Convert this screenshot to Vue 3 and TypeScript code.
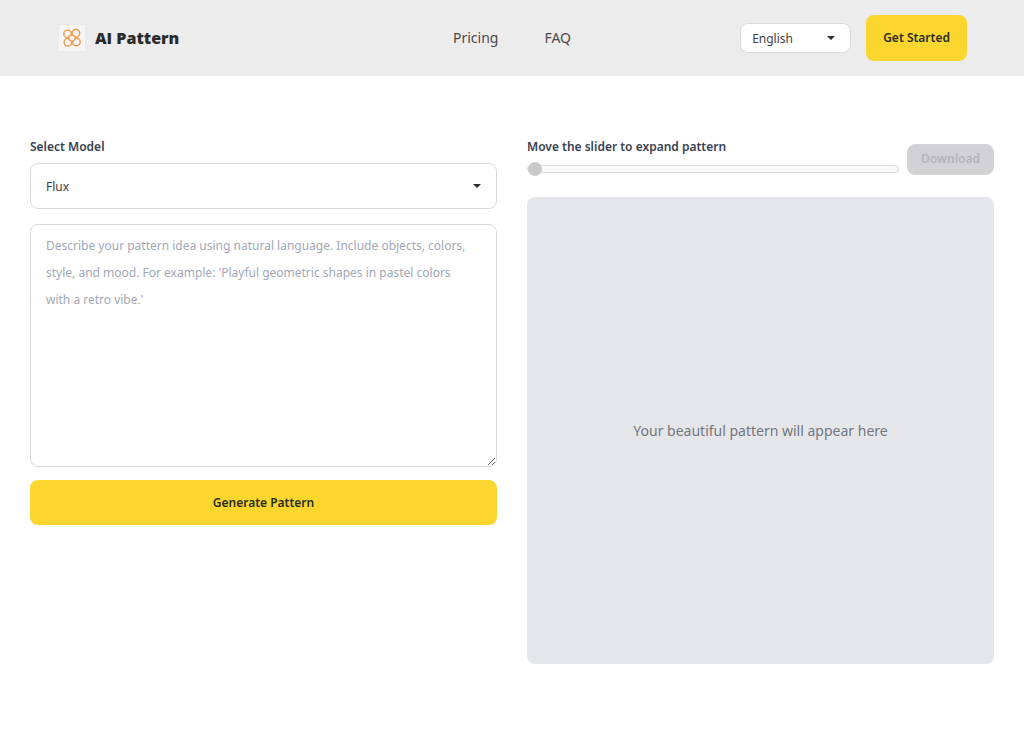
<script setup lang="ts">
import { ref } from 'vue'

const languages: string[] = ['English', 'Español', 'Français']
const models: string[] = ['Flux', 'Stable Diffusion']
const language = ref('English')
const model = ref('Flux')
const prompt = ref('')
const expansion = ref(0)
const placeholder =
  "Describe your pattern idea using natural language. Include objects, colors, style, and mood. For example: 'Playful geometric shapes in pastel colors with a retro vibe.'"
</script>

<template>
  <div class="page">
    <header class="header">
      <a class="brand" href="#">
        <svg class="logo" viewBox="0 0 26 26" aria-hidden="true">
          <rect width="26" height="26" fill="#f7f5f3" />
          <g fill="none" stroke="#eb9a4c" stroke-width="1.4">
            <circle cx="8.6" cy="8.9" r="3.8" />
            <circle cx="16.9" cy="8.3" r="3.8" />
            <circle cx="8.9" cy="17.2" r="3.8" />
            <circle cx="17.4" cy="17" r="3.8" />
            <path d="M13 9.6l3 1.9.2 3-3.1 2-3.1-1.8-.1-3.3z" fill="#f7f5f3" />
          </g>
        </svg>
        <span>AI Pattern</span>
      </a>
      <nav class="nav">
        <a href="#pricing">Pricing</a>
        <a href="#faq">FAQ</a>
      </nav>
      <div class="actions">
        <div class="select language">
          <select v-model="language" aria-label="Language">
            <option v-for="item in languages" :key="item">{{ item }}</option>
          </select>
          <svg class="caret" viewBox="0 0 8 4" aria-hidden="true"><path d="M0 0h8L4 4z" fill="#2b2b2b" /></svg>
        </div>
        <button class="button start" type="button">Get Started</button>
      </div>
    </header>

    <main class="main">
      <form class="form" @submit.prevent>
        <label class="label" for="model">Select Model</label>
        <div class="select model">
          <select id="model" v-model="model">
            <option v-for="item in models" :key="item">{{ item }}</option>
          </select>
          <svg class="caret" viewBox="0 0 8 4" aria-hidden="true"><path d="M0 0h8L4 4z" fill="#2b2b2b" /></svg>
        </div>
        <textarea v-model="prompt" class="prompt" rows="8" aria-label="Pattern description" :placeholder="placeholder"></textarea>
        <button class="button" type="submit">Generate Pattern</button>
      </form>

      <section class="result">
        <div class="toolbar">
          <div class="expand">
            <label class="label" for="expansion">Move the slider to expand pattern</label>
            <input id="expansion" v-model="expansion" class="slider" type="range" min="0" max="100" />
          </div>
          <button class="download" type="button" disabled>Download</button>
        </div>
        <div class="preview">Your beautiful pattern will appear here</div>
      </section>
    </main>
  </div>
</template>

<style>
body {
  margin: 0;
  background: #fff;
}
</style>

<style scoped>
.page,
.page * {
  box-sizing: border-box;
}
.page {
  font-family: 'Noto Sans', 'Open Sans', sans-serif;
  font-size: 12px;
  line-height: 22px;
  color: #374151;
}
a {
  color: inherit;
  text-decoration: none;
}
button,
select,
textarea {
  font: inherit;
}
.header {
  display: grid;
  grid-template-columns: 1fr auto 1fr;
  align-items: center;
  padding: 15px 57px;
  background: #ececec;
}
.brand {
  display: flex;
  align-items: center;
  gap: 10px;
  padding-left: 2px;
  font-family: 'Open Sans', 'Noto Sans', sans-serif;
  font-size: 16px;
  font-weight: 800;
  color: #2b2b2b;
}
.logo {
  width: 26px;
  height: 26px;
}
.nav {
  display: flex;
  gap: 46px;
  font-size: 14px;
  color: #4b4b4b;
}
.actions {
  display: flex;
  justify-content: flex-end;
  align-items: center;
  gap: 15px;
}
.select {
  display: grid;
  align-items: center;
}
.select > * {
  grid-area: 1 / 1;
}
.select select {
  appearance: none;
  width: 100%;
  margin: 0;
  border: 1px solid #d9d9d9;
  border-radius: 8px;
  background: #fff;
  color: #3f4045;
}
.caret {
  justify-self: end;
  width: 8px;
  height: 4px;
  margin-right: 16px;
  pointer-events: none;
}
.language {
  width: 111px;
}
.language select {
  height: 30px;
  padding: 2px 11px 0;
}
.model select {
  height: 46px;
  padding: 2px 15px 0;
}
.button {
  height: 45px;
  padding: 0 17px;
  border: 0;
  border-radius: 8px;
  background: #fad62f;
  color: #2b2b20;
  font-weight: 600;
}
.start {
  height: 46px;
}
.main {
  display: grid;
  grid-template-columns: 1fr 1fr;
  align-items: start;
  gap: 30px;
  padding: 60px 30px;
}
.form {
  display: flex;
  flex-direction: column;
}
.label {
  font-weight: 600;
}
.form .label {
  margin-bottom: 5px;
}
.prompt {
  display: block;
  width: 100%;
  height: 243px;
  margin: 15px 0 13px;
  padding: 7px 20px 7px 15px;
  border: 1px solid #d9d9d9;
  border-radius: 8px;
  line-height: 27px;
  color: #374151;
  resize: vertical;
}
.prompt::placeholder {
  color: #a3a8b4;
}
.toolbar {
  display: flex;
  align-items: center;
  gap: 8px;
}
.expand {
  flex: 1;
  display: flex;
  flex-direction: column;
}
.slider {
  appearance: none;
  width: 100%;
  height: 15px;
  margin: 3px 0 6px;
  background: transparent;
}
.slider::-webkit-slider-runnable-track {
  height: 8px;
  border: 1px solid #d9d9d9;
  border-radius: 4px;
  background: #f9f9f9;
}
.slider::-webkit-slider-thumb {
  appearance: none;
  width: 14px;
  height: 14px;
  margin-top: -4px;
  border-radius: 50%;
  background: #c9c9c9;
}
.download {
  height: 31px;
  padding: 0 13px;
  border: 1px solid #d5d5d9;
  border-radius: 8px;
  background: #d1d1d6;
  color: #b4b4ba;
  font-weight: 600;
}
.preview {
  display: grid;
  place-items: center;
  aspect-ratio: 1;
  margin-top: 15px;
  border-radius: 8px;
  background: #e5e6ea;
  font-size: 14px;
  color: #73777f;
}
</style>
